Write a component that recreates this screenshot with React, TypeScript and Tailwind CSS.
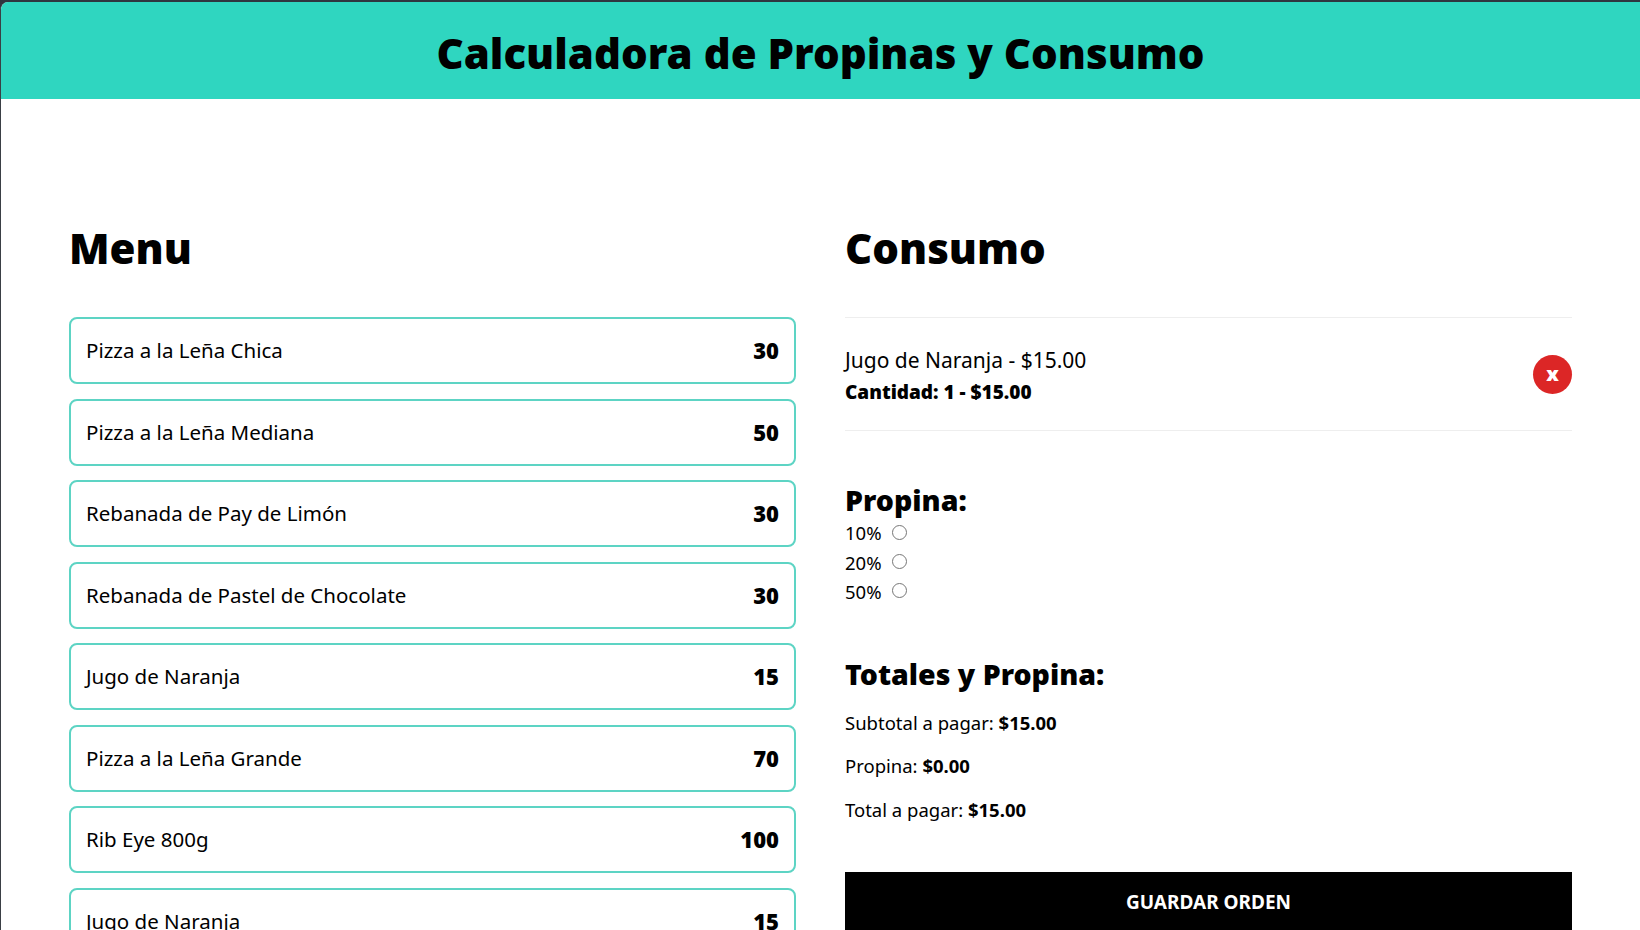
const MENU = [
  { name: 'Pizza a la Leña Chica', price: 30 },
  { name: 'Pizza a la Leña Mediana', price: 50 },
  { name: 'Rebanada de Pay de Limón', price: 30 },
  { name: 'Rebanada de Pastel de Chocolate', price: 30 },
  { name: 'Jugo de Naranja', price: 15 },
  { name: 'Pizza a la Leña Grande', price: 70 },
  { name: 'Rib Eye 800g', price: 100 },
  { name: 'Jugo de Naranja', price: 15 },
]

const TIPS = ['10%', '20%', '50%']

export default function App() {
  return (
    <div className="h-screen overflow-hidden bg-[#2f3640] pt-[2px] font-['Noto_Sans',sans-serif] text-black">
      <div className="h-full overflow-hidden rounded-tl-lg bg-white border-l border-[#3a3f45]">
        <header className="flex h-[97px] items-center justify-center bg-[#2fd6c0] pt-[5px]">
          <h1 className="text-[42px] font-black leading-none">Calculadora de Propinas y Consumo</h1>
        </header>

        <main className="grid grid-cols-2 gap-[49px] pl-[68px] pr-[68px] pt-[124px]">
          <section>
            <h2 className="mb-[44px] text-[42px] font-black leading-[50px]">Menu</h2>
            <div className="flex flex-col gap-[14.5px]">
              {MENU.map((item, idx) => (
                <button
                  key={idx}
                  className="flex h-[67px] w-full items-center justify-between rounded-lg border-2 border-[#5dd4c4] px-[15px] text-[20.5px]"
                >
                  <span>{item.name}</span>
                  <span className="text-[22px] font-black">{item.price}</span>
                </button>
              ))}
            </div>
          </section>

          <section>
            <h2 className="mb-[44px] text-[42px] font-black leading-[50px]">Consumo</h2>
            <div className="flex h-[114px] items-center justify-between border-y border-[#eeeeee]">
              <div>
                <p className="text-[21px] leading-[30px]">Jugo de Naranja - $15.00</p>
                <p className="mt-[5px] text-[19px] font-black leading-6">Cantidad: 1 - $15.00</p>
              </div>
              <button className="flex h-[39px] w-[39px] items-center justify-center rounded-full bg-[#dc2626] text-[20px] font-black text-white">
                x
              </button>
            </div>

            <h3 className="mb-px mt-[51px] text-[28.5px] font-black leading-9">Propina:</h3>
            <div className="flex flex-col">
              {TIPS.map((tip) => (
                <label key={tip} className="flex h-[29.3px] items-center gap-[10px] text-[18.5px]">
                  <span className="pb-px">{tip}</span>
                  <input type="radio" name="tip" className="mb-[3px] h-[15px] w-[15px]" />
                </label>
              ))}
            </div>

            <h3 className="mt-[49px] text-[28.5px] font-black leading-9">Totales y Propina:</h3>
            <div className="mt-[18px] flex flex-col gap-[18.5px] text-[18.5px] leading-[25px]">
              <p>Subtotal a pagar: <span className="font-bold">$15.00</span></p>
              <p>Propina: <span className="font-bold">$0.00</span></p>
              <p>Total a pagar: <span className="font-bold">$15.00</span></p>
            </div>

            <button className="mt-[50px] h-[60px] w-full bg-black text-[19px] font-bold uppercase text-white">
              Guardar Orden
            </button>
          </section>
        </main>
      </div>
    </div>
  )
}
